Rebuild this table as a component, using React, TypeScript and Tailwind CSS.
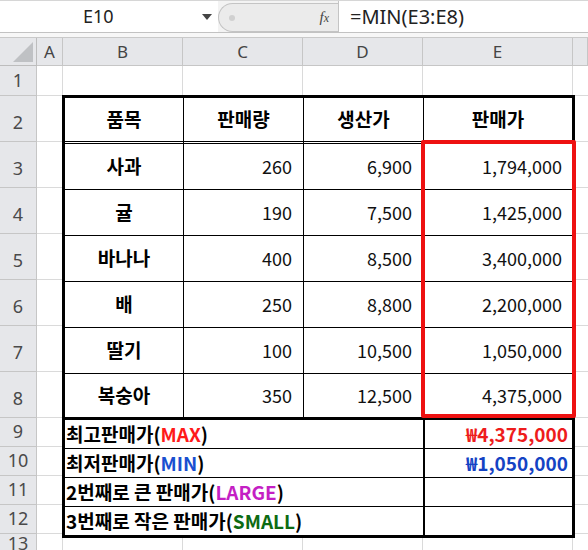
import React from 'react';

const KR = "font-['Noto_Sans_CJK_KR','Noto_Sans',sans-serif]";
const UI = "font-['Noto_Sans','Open_Sans',sans-serif]";

interface Fruit {
  name: string;
  qty: string;
  cost: string;
  price: string;
}

const fruits: Fruit[] = [
  { name: '사과', qty: '260', cost: '6,900', price: '1,794,000' },
  { name: '귤', qty: '190', cost: '7,500', price: '1,425,000' },
  { name: '바나나', qty: '400', cost: '8,500', price: '3,400,000' },
  { name: '배', qty: '250', cost: '8,800', price: '2,200,000' },
  { name: '딸기', qty: '100', cost: '10,500', price: '1,050,000' },
  { name: '복숭아', qty: '350', cost: '12,500', price: '4,375,000' },
];

const sheetRows = [1, 2, 3, 4, 5, 6, 7, 8, 9, 10, 11, 12, 13];

const FormulaBar: React.FC = () => (
  <div className="flex h-[33px] border-t border-[#d6d6d6] border-b border-b-[#c2c2c2] bg-[#f3f3f3]">
    <div className="flex w-[218px] items-center bg-white">
      <span className={`${UI} flex-1 pl-[83px] text-[18px] text-[#222]`}>E10</span>
      <svg width="10" height="6" viewBox="0 0 10 6" className="mr-[6px]">
        <path d="M0 0 L10 0 L5 6 Z" fill="#444" />
      </svg>
    </div>
    <div className="mt-[2px] flex w-[120px] items-center rounded-l-full border border-r-0 border-[#c4c4c4] bg-[#ebebeb]">
      <span className="ml-[10px] h-[6px] w-[6px] rounded-full bg-[#d0d0d0]" />
      <span className="ml-auto mr-[9px] font-['Liberation_Serif',serif] text-[15px] italic text-[#444]">
        f<span className="text-[12px]">x</span>
      </span>
    </div>
    <div className="flex flex-1 items-center border-l border-[#c4c4c4] bg-white">
      <span className={`${UI} pl-[11px] text-[20px] text-[#222]`}>=MIN(E3:E8)</span>
    </div>
  </div>
);

const SalesTable: React.FC = () => (
  <div className="relative col-span-4 col-start-3 row-span-11 row-start-3 -ml-px -mt-px w-[513px] self-start border-[3px] border-black bg-white">
    <div className="grid grid-cols-[118px_120px_120px_1fr]">
      {['품목', '판매량', '생산가', '판매가'].map((h, i) => (
        <div
          key={h}
          className={`${KR} flex h-[46px] items-center justify-center border-b-[3px] border-double border-black text-[19px] font-bold text-black ${i > 0 ? 'border-l' : ''}`}
        >
          {h}
        </div>
      ))}
      {fruits.map((f, idx) => {
        const last = idx === fruits.length - 1;
        const bb = last ? 'border-b-[3px]' : 'border-b';
        return (
          <React.Fragment key={f.name}>
            <div className={`${KR} flex h-[46px] items-center justify-center border-black ${bb} text-[19px] font-bold text-black`}>
              {f.name}
            </div>
            <div className={`${KR} flex h-[46px] items-center justify-end border-l border-black ${bb} pr-[11px] text-[18px] text-[#111]`}>
              {f.qty}
            </div>
            <div className={`${KR} flex h-[46px] items-center justify-end border-l border-black ${bb} pr-[11px] text-[18px] text-[#111]`}>
              {f.cost}
            </div>
            <div className={`${KR} flex h-[46px] items-center justify-end border-l border-black ${bb} pr-[10px] text-[18px] text-[#111]`}>
              {f.price}
            </div>
          </React.Fragment>
        );
      })}

      <div className={`${KR} col-span-3 flex h-[29px] items-center border-b border-black pl-px text-[19px] font-bold text-black`}>
        최고판매가(<span className="text-[#ff1a1a]">MAX</span>)
      </div>
      <div className={`${KR} flex h-[29px] items-center justify-end border-b border-l-2 border-black pr-[4px] text-[19px] font-bold text-[#ee1c1c]`}>
        ₩4,375,000
      </div>

      <div className={`${KR} col-span-3 flex h-[29px] items-center border-b border-black pl-px text-[19px] font-bold text-black`}>
        최저판매가(<span className="text-[#1a4fd0]">MIN</span>)
      </div>
      <div className={`${KR} flex h-[29px] items-center justify-end border-b border-l-2 border-black pr-[4px] text-[19px] font-bold text-[#1443c4]`}>
        ₩1,050,000
      </div>

      <div className={`${KR} col-span-3 flex h-[29px] items-center border-b border-black pl-px text-[19px] font-bold text-black`}>
        2번째로 큰 판매가(<span className="text-[#c41fc4]">LARGE</span>)
      </div>
      <div className="h-[29px] border-b border-l-2 border-black" />

      <div className={`${KR} col-span-3 flex h-[28px] items-center pl-px text-[19px] font-bold text-black`}>
        3번째로 작은 판매가(<span className="text-[#0d6b12]">SMALL</span>)
      </div>
      <div className="h-[28px] border-l-2 border-black" />
    </div>

    {/* highlight around E3:E8 */}
    <div className="pointer-events-none absolute left-[356px] top-[42px] h-[278px] w-[155px] rounded-[2px] border-[4px] border-[#ee1111]" />
  </div>
);

const App: React.FC = () => {
  return (
    <div className="h-[550px] w-[588px] overflow-hidden bg-white">
      <FormulaBar />
      <div className="h-[5px] border-b border-[#c9c9c9] bg-[#f7f7f7]" />
      <div className="grid grid-cols-[37px_26px_120px_120px_120px_150px_1fr] grid-rows-[28px_30px_46px_46px_46px_46px_46px_46px_46px_29px_29px_29px_29px_1fr]">
        {/* column headers */}
        <div className="relative border-b border-r border-[#bdbdbd] bg-[#e6e7ea]">
          <svg width="20" height="20" viewBox="0 0 20 20" className="absolute bottom-[3px] right-[3px]">
            <path d="M20 0 L20 20 L0 20 Z" fill="#bfc1c4" />
          </svg>
        </div>
        {['A', 'B', 'C', 'D', 'E', ''].map((c, i) => (
          <div
            key={i}
            className={`${UI} flex items-center justify-center border-b border-r border-[#c6c6c6] bg-[#e6e7ea] text-[17px] text-[#444]`}
          >
            {c}
          </div>
        ))}

        {sheetRows.map((r) => (
          <React.Fragment key={r}>
            <div
              className={`${UI} flex items-end justify-center border-b border-r border-[#c6c6c6] bg-[#e6e7ea] text-[18px] leading-none text-[#4a4a4a] ${
                r >= 2 && r <= 8 ? 'pb-[10px]' : 'pb-[6px]'
              }`}
              style={{ gridRow: r + 1, gridColumn: 1 }}
            >
              {r}
            </div>
            <div className="border-b border-r border-[#dadada]" style={{ gridRow: r + 1, gridColumn: 2 }} />
            {(r === 1 || r === 13) &&
              [3, 4, 5, 6].map((c) => (
                <div key={c} className="border-b border-r border-[#dadada]" style={{ gridRow: r + 1, gridColumn: c }} />
              ))}
            <div className="border-b border-[#dadada]" style={{ gridRow: r + 1, gridColumn: 7 }} />
          </React.Fragment>
        ))}

        <SalesTable />
      </div>
    </div>
  );
};

export default App;
